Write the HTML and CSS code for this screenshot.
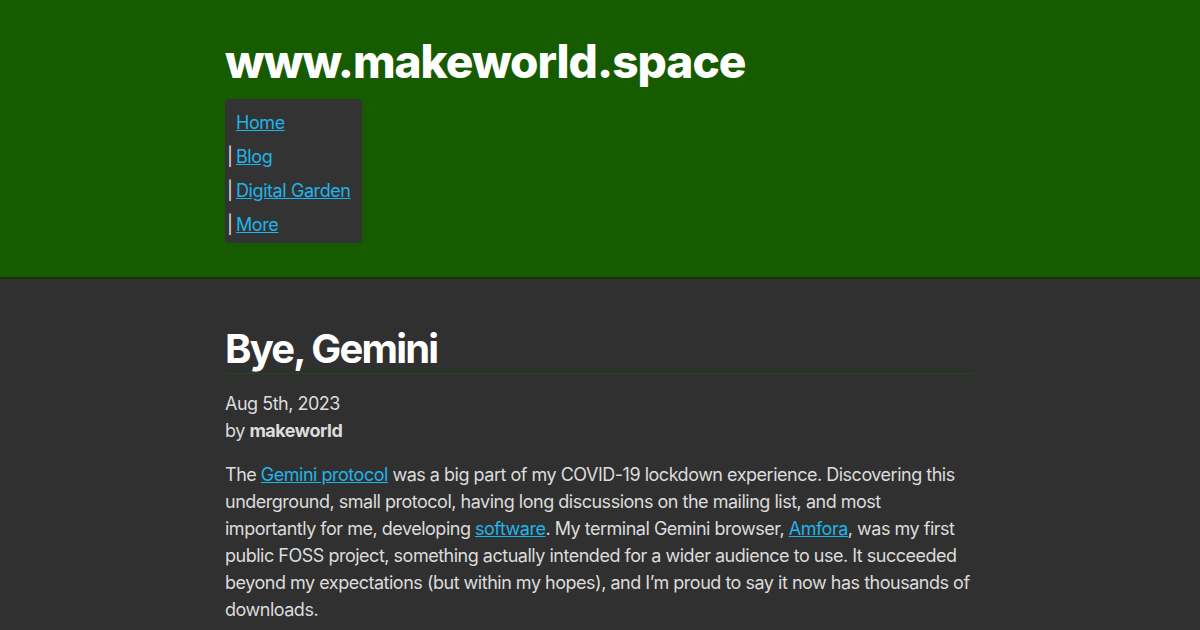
FILE: index.html
```html
<!DOCTYPE html>
<html lang="en">
<head>
<meta charset="utf-8">
<title>Bye, Gemini</title>
<link rel="stylesheet" href="styles.css">
</head>
<body>
<header class="site-header">
  <div class="wrap">
    <div class="site-title">www.makeworld.space</div>
    <nav class="nav">
      <div class="nav-item"><span class="sep hidden">|</span><a href="#">Home</a></div>
      <div class="nav-item"><span class="sep">|</span><a href="#">Blog</a></div>
      <div class="nav-item"><span class="sep">|</span><a href="#">Digital Garden</a></div>
      <div class="nav-item"><span class="sep">|</span><a href="#">More</a></div>
    </nav>
  </div>
</header>
<main class="wrap content">
  <h1 class="post-title">Bye, Gemini</h1>
  <div class="meta">
    <div>Aug 5th, 2023</div>
    <div>by <strong>makeworld</strong></div>
  </div>
  <p>The <a href="#">Gemini protocol</a> was a big part of my COVID-19 lockdown experience. Discovering this underground, small protocol, having long discussions on the mailing list, and most importantly for me, developing <a href="#">software</a>. My terminal Gemini browser, <a href="#">Amfora</a>, was my first public FOSS project, something actually intended for a wider audience to use. It succeeded beyond my expectations (but within my hopes), and I’m proud to say it now has thousands of downloads.</p>
</main>
</body>
</html>
```
FILE: styles.css
```css
html, body {
  margin: 0;
  padding: 0;
}
body {
  background: #303030;
  color: #dcdcdc;
  font-family: Inter, "Noto Sans", sans-serif;
  font-size: 18px;
  line-height: 27px;
  letter-spacing: -0.49px;
}
a {
  color: #1fb4ea;
  text-decoration: underline;
}
.wrap {
  width: 750px;
  margin: 0 auto;
}
.site-header {
  background: #175b00;
  border-bottom: 2px solid #0e3800;
  padding: 33px 0 34px;
}
.site-title {
  color: #ffffff;
  font-weight: 800;
  font-size: 46px;
  line-height: 56px;
  letter-spacing: -1px;
}
.nav {
  display: inline-flex;
  flex-direction: column;
  background: #333333;
  border-radius: 4px;
  margin-top: 10px;
  padding: 7px 11px 1px 2px;
}
.nav-item {
  color: #e0e0e0;
  line-height: 34px;
  white-space: nowrap;
  letter-spacing: -0.42px;
}
.sep {
  display: inline-block;
  width: 9px;
}
.sep.hidden {
  visibility: hidden;
}
.content {
  padding-top: 46px;
}
.post-title {
  color: #ffffff;
  font-size: 40px;
  line-height: 48px;
  font-weight: 700;
  letter-spacing: -1.8px;
  margin: 0;
  border-bottom: 1px solid #1d4a17;
}
.meta {
  margin-top: 16px;
}
.meta strong {
  font-weight: 700;
}
p {
  margin: 17px 0 0;
}
```
